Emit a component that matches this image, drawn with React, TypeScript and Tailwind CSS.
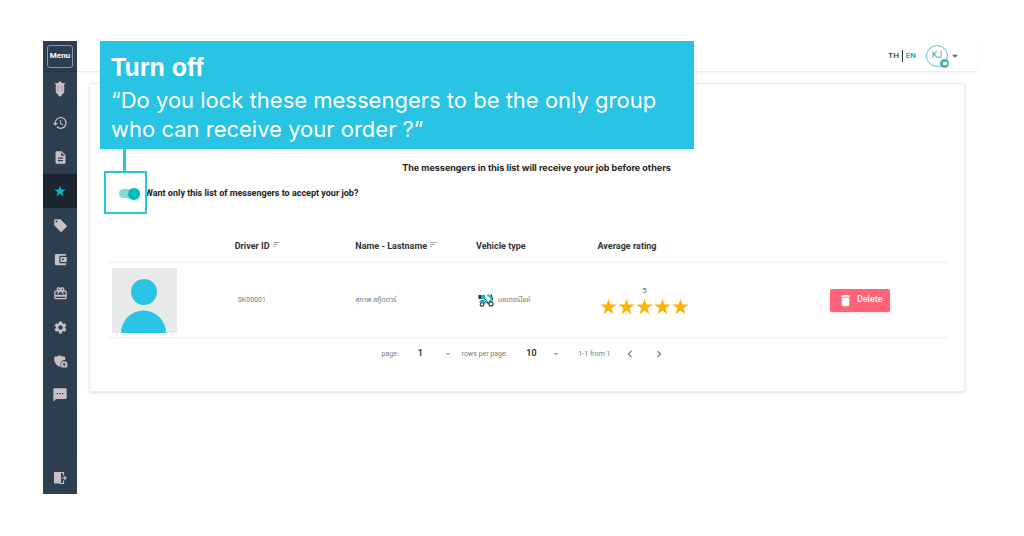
import React from 'react';
import {
    MdAccountBalanceWallet,
    MdArrowDropDown,
    MdChevronLeft,
    MdChevronRight,
    MdDelete,
    MdDescription,
    MdHistory,
    MdLocalOffer,
    MdSettings,
    MdSms,
    MdSort,
} from 'react-icons/md';
import clsx from 'clsx';

interface Messenger {
    id: string;
    name: string;
    vehicle: string;
    rating: number;
}

interface MenuItem {
    label: string;
    icon: React.ReactNode;
    active?: boolean;
}

const messengers: Messenger[] = [
    { id: 'SK00001', name: 'สุภาพ สกู๊ตตาร์', vehicle: 'มอเตอร์ไซค์', rating: 5 },
];

const StarIcon = ({ className }: { className: string }) => (
    <svg viewBox="0 0 24 24" className={className} fill="currentColor" aria-hidden="true">
        <path d="M12 1l2.700 8.200h8.800l-7.100 5.200 2.700 8.400L12 17.600l-7.100 5.200 2.700-8.400L.5 9.200h8.800z" />
    </svg>
);

/* Scooter seen from the front */
const ScooterFrontIcon = () => (
    <svg viewBox="0 0 16 16" className="size-4" fill="currentColor" aria-hidden="true">
        <path d="M7 .5h2l.7 1.500 3.600.3v.9l-1.500.3.500 2.300v5.400l-1.300 1.600-1.200.4v1.400L8 15.700l-1.800-1.100v-1.400L5 12.800l-1.300-1.600V5.800l.5-2.300-1.500-.3v-.9l3.600-.3z" />
        <path d="M6 4.500v6M10 4.500v6" stroke="#2c3e50" strokeWidth=".3" />
    </svg>
);

/* Present with a ribbon on top */
const GiftIcon = () => (
    <svg viewBox="0 0 24 24" className="size-[15px]" fill="currentColor" aria-hidden="true">
        <path d="M20 7h-2.200A3.200 3.200 0 0 0 12 3.600 3.200 3.200 0 0 0 6.200 7H4a2 2 0 0 0-2 2v10a2 2 0 0 0 2 2h16a2 2 0 0 0 2-2V9a2 2 0 0 0-2-2zM15 4a1.200 1.200 0 1 1 0 2.400A1.200 1.200 0 0 1 15 4zM9 4a1.200 1.200 0 1 1 0 2.400A1.200 1.200 0 0 1 9 4zm11 15H4v-2h16zm0-5H4V9h4.500l-2 2.800L8 13l4-4.500 4 4.500 1.500-1.200-2-2.800H20z" />
    </svg>
);

/* Shield with a small support badge */
const ShieldIcon = () => (
    <svg viewBox="0 0 24 24" className="size-[15px]" fill="currentColor" aria-hidden="true">
        <path d="M10.500 2c3 1.800 5 2.300 9 2.300v5.200c-4.500-.2-7.500 3-7.500 7v4C6 18.500 2 14 2 9V4.300c3.500 0 5.500-.5 8.500-2.300z" />
        <path d="M18 11.500a5 5 0 0 0-5 5V20a1.500 1.500 0 0 0 1.500 1.500h7A1.500 1.500 0 0 0 23 20v-3.500a5 5 0 0 0-5-5zm-2.300 5.500a2.300 2.300 0 0 1 4.600 0h-1.500v2.500h-1.600V17z" />
    </svg>
);

/* Open door with an arrow */
const LogoutIcon = () => (
    <svg viewBox="0 0 16 16" className="size-4" aria-hidden="true">
        <path d="M2 2h7v12.500L7.500 13.500H2z" fill="currentColor" />
        <path d="M9 2.500h2.500v3M11.500 10.500v3H9M9.500 8H14" fill="none" stroke="currentColor" strokeWidth="1.200" />
        <path d="M12.300 5.600 15 8l-2.700 2.400z" fill="currentColor" />
    </svg>
);

const ScooterIcon = () => (
    <svg viewBox="0 0 32 26" className="h-[13px] w-4 shrink-0" aria-hidden="true">
        <path d="M1 2h5v8H1z" fill="#12343b" />
        <path d="M6 2h8v8H6z" fill="#10b8b8" />
        <path d="M3 14l3-2h8l3 5h4l3-5 5 1 2 3-5-1-5 4H12l-3-3-6 1z" fill="#12b5b5" />
        <path d="M18 1h9l2 10-3 2-4-7-4-2z" fill="#35c9c9" />
        <path d="M12 9l5 3 2 6h3l3-5M27 1l2 11" fill="none" stroke="#24344a" strokeWidth="2" />
        <circle cx="8" cy="21" r="3.500" fill="#fff" stroke="#24344a" strokeWidth="2.400" />
        <circle cx="26" cy="20" r="4" fill="#fff" stroke="#24344a" strokeWidth="2.400" />
    </svg>
);

const menuItems: MenuItem[] = [
    { label: 'Delivery', icon: <ScooterFrontIcon /> },
    { label: 'History', icon: <MdHistory className="size-4" /> },
    { label: 'Documents', icon: <MdDescription className="size-[15px]" /> },
    { label: 'Favourites', icon: <StarIcon className="size-3" />, active: true },
    { label: 'Promotions', icon: <MdLocalOffer className="size-[15px]" /> },
    { label: 'Wallet', icon: <MdAccountBalanceWallet className="size-[15px]" /> },
    { label: 'Rewards', icon: <GiftIcon /> },
    { label: 'Settings', icon: <MdSettings className="size-[15px]" /> },
    { label: 'Privacy', icon: <ShieldIcon /> },
    { label: 'Messages', icon: <MdSms className="size-4" /> },
];

function Sidebar() {
    return (
        <nav className="flex w-[34px] shrink-0 flex-col bg-[#2c3e50] text-[#c8c0c4]">
            <div className="flex h-[31px] items-center justify-center border-b border-[#27323f]">
                <button
                    type="button"
                    className="h-[23px] w-[26px] rounded-[3px] border border-[#8b97a5] text-[8px] font-bold text-white"
                >
                    Menu
                </button>
            </div>
            {menuItems.map((item) => (
                <button
                    key={item.label}
                    type="button"
                    aria-label={item.label}
                    className={clsx(
                        'flex h-[34px] items-center justify-center',
                        item.active && 'bg-[#1b2530] text-[#00bfbf]'
                    )}
                >
                    {item.icon}
                </button>
            ))}
            <button type="button" aria-label="Log out" className="mt-auto flex h-8 items-center justify-center">
                <LogoutIcon />
            </button>
        </nav>
    );
}

function Header() {
    return (
        <header className="flex h-[31px] items-center justify-end border-b border-[#ececec] pr-[15px] text-[8px] shadow-xs">
            <a href="#th" className="border-r border-[#333333] pr-[3px] leading-3 font-medium text-[#333333]">
                TH
            </a>
            <a href="#en" className="pl-[3px] leading-3 font-bold text-[#12bcc2]">
                EN
            </a>
            <button type="button" aria-label="Account" className="ml-[10px] flex items-center">
                <span className="relative flex size-[22px] items-center justify-center rounded-full border border-[#62c4c8] text-[9px] text-[#35aeb4]">
                    KJ
                    <span className="absolute -right-[2px] -bottom-[2px] flex size-[9px] items-center justify-center rounded-full bg-[#45b5ba]">
                        <span className="h-[3px] w-1 rounded-[1px] bg-white" />
                    </span>
                </span>
                <MdArrowDropDown className="size-[14px] text-[#666666]" />
            </button>
        </header>
    );
}

/* Blue explanation box over the page */
function Banner() {
    return (
        <aside className="absolute top-0 left-[23px] z-10 h-[108px] w-[594px] bg-[#29c3e4] pt-3 pl-[11px] text-white">
            <h1 className="font-['Liberation_Sans',sans-serif] text-[25px] leading-7 font-bold">Turn off</h1>
            <p className="mt-[5px] font-['Inter',sans-serif] text-[22px] leading-[29px]">
                “Do you lock these messengers to be the only group
                <br />
                who can receive your order ?”
            </p>
        </aside>
    );
}

function LockToggle() {
    return (
        <label className="relative flex w-fit items-center gap-[5px] text-[9px] font-bold text-[#222222]">
            <input type="checkbox" defaultChecked className="peer sr-only" />
            <span className="flex h-[9px] w-[21px] items-center justify-end rounded-full bg-[#7fdedd]">
                <span className="size-3 shrink-0 rounded-full bg-[#00bdbb] shadow-sm" />
            </span>
            Want only this list of messengers to accept your job?
            <span className="absolute -top-4 -left-[15px] size-[43px] border-2 border-[#29c3e4]">
                <span className="absolute bottom-full left-[17px] h-6 w-[3px] bg-[#29c3e4]" />
            </span>
        </label>
    );
}

function MessengerTable() {
    return (
        <table className="w-full table-fixed border-collapse text-left">
            <colgroup>
                <col className="w-[15%]" />
                <col className="w-[14.4%]" />
                <col className="w-[14.4%]" />
                <col className="w-[14.5%]" />
                <col className="w-[21%]" />
                <col />
            </colgroup>
            <thead>
                <tr className="h-8 border-b border-[#eeeeee] text-[9px] text-[#333333]">
                    <th aria-label="Photo" />
                    <th>
                        Driver ID <MdSort className="inline size-[9px] align-top text-[#888888]" />
                    </th>
                    <th>
                        Name - Lastname <MdSort className="inline size-[9px] align-top text-[#888888]" />
                    </th>
                    <th>Vehicle type</th>
                    <th>Average rating</th>
                    <th aria-label="Actions" />
                </tr>
            </thead>
            <tbody>
                {messengers.map((messenger) => (
                    <tr key={messenger.id} className="h-[75px] border-b border-[#eeeeee] text-[7px] text-[#777777]">
                        <td className="pl-[3px]">
                            <svg viewBox="0 0 65 65" className="size-[65px]" aria-hidden="true">
                                <path fill="#e8eaea" d="M0 0h65v65H0z" />
                                <circle cx="32" cy="24" r="13" fill="#29c3e4" />
                                <path fill="#29c3e4" d="M9 65a22.500 22.500 0 0 1 45 0z" />
                            </svg>
                        </td>
                        <td className="pl-[3px]">{messenger.id}</td>
                        <td>{messenger.name}</td>
                        <td>
                            <div className="flex items-center gap-1 pl-[2px]">
                                <ScooterIcon />
                                {messenger.vehicle}
                            </div>
                        </td>
                        <td>
                            <div className="flex w-[94px] flex-col items-center gap-[2px]">
                                <span className="text-[8px] leading-[10px]">{messenger.rating}</span>
                                <div className="flex gap-px text-[#ffb300]">
                                    {Array.from({ length: messenger.rating }, (_, i) => (
                                        <StarIcon key={i} className="size-[17px]" />
                                    ))}
                                </div>
                            </div>
                        </td>
                        <td>
                            <button
                                type="button"
                                className="mx-auto flex h-[23px] w-[60px] items-center justify-center gap-1 rounded-[2px] bg-[#ff6377] text-[9px] font-medium text-white shadow-sm"
                            >
                                <MdDelete className="size-[15px]" />
                                Delete
                            </button>
                        </td>
                    </tr>
                ))}
            </tbody>
        </table>
    );
}

function PageSelect({ label, options }: { label: string; options: string[] }) {
    return (
        <label className="flex items-center">
            {label}
            <span className="relative ml-[15px] flex w-10 items-center">
                <select className="w-full appearance-none pl-1 text-[9px] font-medium text-[#222222]">
                    {options.map((option) => (
                        <option key={option}>{option}</option>
                    ))}
                </select>
                <MdArrowDropDown className="pointer-events-none absolute right-0 size-3 text-[#aaaaaa]" />
            </span>
        </label>
    );
}

function Pagination() {
    return (
        <div className="flex items-center justify-center pt-[9px] pr-2 text-[7px] text-[#777777]">
            <PageSelect label="page:" options={['1']} />
            <span className="w-2" />
            <PageSelect label="rows per page:" options={['10', '20', '50']} />
            <span className="ml-4">1-1 from 1</span>
            <button type="button" aria-label="Previous page" className="ml-[13px]">
                <MdChevronLeft className="size-[14px]" />
            </button>
            <button type="button" aria-label="Next page" className="ml-[15px]">
                <MdChevronRight className="size-[14px]" />
            </button>
        </div>
    );
}

export default function App() {
    return (
        <div className="flex min-h-screen bg-white pt-[41px] pr-[47px] pb-[42px] pl-[43px] font-['Roboto','Noto_Sans_Thai','Noto_Sans',sans-serif]">
            <Sidebar />
            <div className="relative min-w-0 flex-1">
                <Header />
                <Banner />
                <main className="mx-3 mt-[11px] rounded-[2px] border border-[#ececec] pt-[78px] pr-[17px] pb-[30px] pl-[19px] shadow-sm">
                    <h2 className="pl-[17px] text-center font-['Inter',sans-serif] text-[9px] leading-3 font-bold text-[#222222]">
                        The messengers in this list will receive your job before others
                    </h2>
                    <div className="mt-[13px] mb-[30px] pl-[10px]">
                        <LockToggle />
                    </div>
                    <MessengerTable />
                    <Pagination />
                </main>
            </div>
        </div>
    );
}
